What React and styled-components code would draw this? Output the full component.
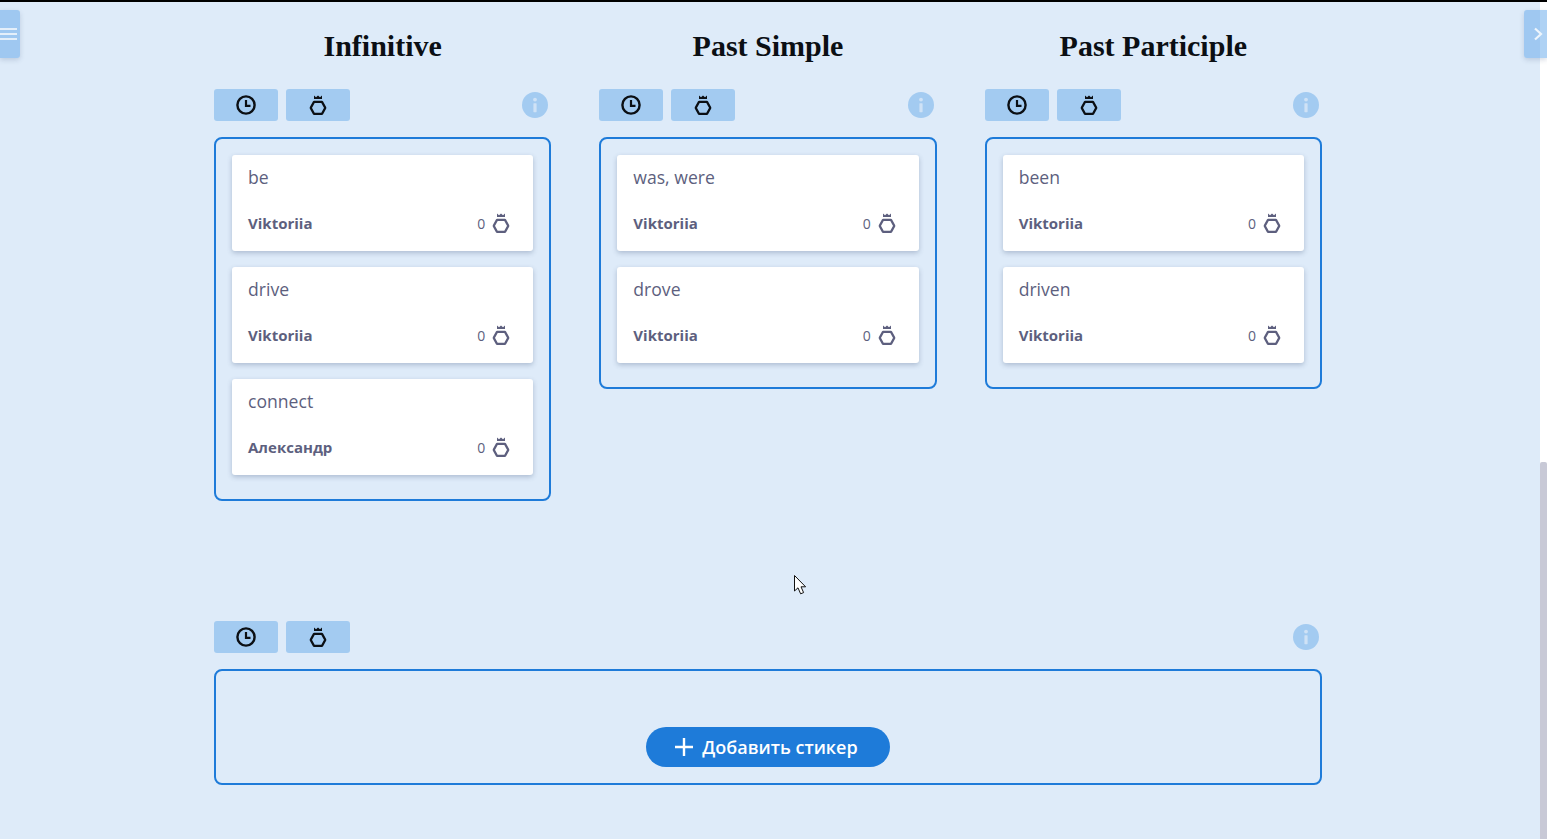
import React from "react";
import styled, { createGlobalStyle } from "styled-components";

const GlobalStyle = createGlobalStyle`
  html, body {
    margin: 0;
    height: 100%;
    overflow: hidden;
  }
  body {
    background: #deebf9;
    font-family: "Open Sans", "Liberation Sans", sans-serif;
  }
`;

const Page = styled.div`
  height: 839px;
  display: flex;
  flex-direction: row;
  background: #deebf9;
  border-top: 2px solid #000;
  box-sizing: border-box;
  position: relative;
  overflow: hidden;
`;
const Main = styled.div`
  flex: 1;
  padding-left: 214px;
`;
const Content = styled.div`
  width: 1108px;
`;
const Columns = styled.div`
  display: grid;
  grid-template-columns: repeat(3, 1fr);
  column-gap: 48px;
  align-items: start;
  height: 619px;
`;
const Heading = styled.h2`
  margin: 0;
  height: 87px;
  padding-top: 26px;
  box-sizing: border-box;
  text-align: center;
  font-family: "Liberation Serif", serif;
  font-size: 30px;
  line-height: 36px;
  font-weight: 700;
  color: #0b0f14;
`;
const Toolbar = styled.div`
  display: flex;
  flex-direction: row;
  align-items: center;
  gap: 8px;
  height: 32px;
  margin-bottom: 16px;
`;
const ToolButton = styled.div`
  width: 64px;
  height: 32px;
  border-radius: 3px;
  background: #a3cbf1;
  display: flex;
  justify-content: center;
  align-items: center;
`;
const InfoBadge = styled.div`
  width: 26px;
  height: 26px;
  margin-left: auto;
  margin-right: 3px;
  border-radius: 50%;
  background: #a3cbf1;
  display: flex;
  justify-content: center;
  align-items: center;
`;
const Board = styled.div`
  border: 2px solid #1e7bd9;
  border-radius: 8px;
  box-sizing: border-box;
  padding: 16px 16px 24px;
  display: flex;
  flex-direction: column;
  gap: 16px;
`;
const WideBoard = styled(Board)`
  height: 116px;
  padding: 56px 0 0;
  align-items: center;
`;
const Card = styled.div`
  height: 96px;
  box-sizing: border-box;
  padding: 10px 16px 0;
  background: #fff;
  border-radius: 3px;
  box-shadow: 0 2px 5px rgba(60, 80, 120, 0.3);
  color: #5d5f7e;
`;
const CardWord = styled.div`
  font-size: 17.6px;
  line-height: 25px;
  height: 46px;
`;
const CardFooter = styled.div`
  display: flex;
  flex-direction: row;
  align-items: center;
  height: 24px;
  padding-right: 6px;
`;
const Author = styled.div`
  flex: 1;
  font-size: 15px;
  font-weight: 700;
`;
const Likes = styled.div`
  font-size: 14px;
  margin-right: 6px;
`;
const AddButton = styled.div`
  width: 244px;
  height: 40px;
  padding-right: 3px;
  box-sizing: border-box;
  border-radius: 20px;
  background: #1e7bd9;
  color: #fff;
  display: flex;
  justify-content: center;
  align-items: center;
  gap: 9px;
  font-size: 18px;
  font-weight: 600;
`;
const SideTab = styled.div`
  position: absolute;
  top: 8px;
  ${(p) => (p.$right ? "left: 1524px; width: 23px;" : "left: 0; width: 20px;")}
  height: 48px;
  background: rgba(96, 165, 233, 0.5);
  border-radius: ${(p) => (p.$right ? "3px 0 0 3px" : "0 3px 3px 0")};
  box-shadow: 0 2px 5px rgba(60, 80, 120, 0.2);
  display: flex;
  align-items: center;
  justify-content: ${(p) => (p.$right ? "flex-end" : "flex-start")};
  z-index: 2;
`;
const Scrollbar = styled.div`
  width: 7px;
  background: #fff;
  display: flex;
  flex-direction: column;
  justify-content: flex-end;
`;
const ScrollThumb = styled.div`
  height: 377px;
  border-radius: 2px 2px 0 0;
  background: #c8c9d6;
`;
const Cursor = styled.svg`
  position: absolute;
  left: 794px;
  top: 573px;
`;
const ChevronBox = styled.svg`
  margin-right: 4px;
`;

const ClockIcon = () => (
  <svg width="20" height="20" viewBox="0 0 20 20" fill="none" stroke="#0b0f14" strokeWidth="2.4">
    <circle cx="10" cy="10" r="8.6" />
    <path d="M10 5V10.8H14.5" strokeWidth="2.2" />
  </svg>
);

const RingIcon = ({ color = "#0b0f14" }) => (
  <svg width="20" height="20" viewBox="0 0 20 20" fill="none" stroke={color} strokeWidth="2.2">
    <path d="M6 6.9H14L17.3 12.9L14 18.9H6L2.7 12.9Z" strokeLinejoin="bevel" />
    <path d="M6 4V0.6L8 2.2L10 0.6L12 2.2L14 0.6V4Z" fill={color} stroke="none" />
  </svg>
);

const InfoIcon = () => (
  <svg width="6" height="16" viewBox="0 0 6 16" fill="#cfe2f6">
    <circle cx="3" cy="2.6" r="1.9" />
    <rect x="1.4" y="6.2" width="3.2" height="9" rx="0.6" />
  </svg>
);

const PlusIcon = () => (
  <svg width="18" height="18" viewBox="0 0 18 18" stroke="#fff" strokeWidth="2.4">
    <path d="M9 0V18M0 9H18" />
  </svg>
);

const MenuIcon = () => (
  <svg width="17" height="14" viewBox="0 0 17 14" stroke="#e4effa" strokeWidth="2">
    <path d="M0 2H17M0 7H17M0 12H17" />
  </svg>
);

const ChevronIcon = () => (
  <ChevronBox width="10" height="14" viewBox="0 0 10 14" fill="none" stroke="#eef5fc" strokeWidth="2.2">
    <path d="M2 1.5L8 7L2 12.5" />
  </ChevronBox>
);

const columns = [
  {
    title: "Infinitive",
    cards: [
      { word: "be", author: "Viktoriia" },
      { word: "drive", author: "Viktoriia" },
      { word: "connect", author: "Александр" },
    ],
  },
  {
    title: "Past Simple",
    cards: [
      { word: "was, were", author: "Viktoriia" },
      { word: "drove", author: "Viktoriia" },
    ],
  },
  {
    title: "Past Participle",
    cards: [
      { word: "been", author: "Viktoriia" },
      { word: "driven", author: "Viktoriia" },
    ],
  },
];

const BoardTools = () => (
  <Toolbar>
    <ToolButton>
      <ClockIcon />
    </ToolButton>
    <ToolButton>
      <RingIcon />
    </ToolButton>
    <InfoBadge>
      <InfoIcon />
    </InfoBadge>
  </Toolbar>
);

export default function App() {
  return (
    <Page>
      <GlobalStyle />
      <SideTab>
        <MenuIcon />
      </SideTab>
      <SideTab $right>
        <ChevronIcon />
      </SideTab>
      <Main>
        <Content>
          <Columns>
            {columns.map((col) => (
              <div key={col.title}>
                <Heading>{col.title}</Heading>
                <BoardTools />
                <Board>
                  {col.cards.map((card) => (
                    <Card key={card.word}>
                      <CardWord>{card.word}</CardWord>
                      <CardFooter>
                        <Author>{card.author}</Author>
                        <Likes>0</Likes>
                        <RingIcon color="#5d5f7e" />
                      </CardFooter>
                    </Card>
                  ))}
                </Board>
              </div>
            ))}
          </Columns>
          <BoardTools />
          <WideBoard>
            <AddButton>
              <PlusIcon />
              Добавить стикер
            </AddButton>
          </WideBoard>
        </Content>
      </Main>
      <Scrollbar>
        <ScrollThumb />
      </Scrollbar>
      <Cursor width="14" height="21" viewBox="0 0 14 21">
        <path d="M0.5 0.5V16L4 12.8L6.6 18.8L9.6 17.6L7 11.8H11.6Z" fill="#fff" stroke="#111" strokeWidth="1" />
      </Cursor>
    </Page>
  );
}
